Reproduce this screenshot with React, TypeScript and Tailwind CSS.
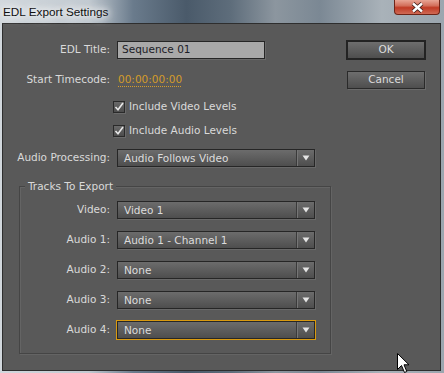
import React from 'react'

const uiFont = "font-['DejaVu_Sans',Verdana,sans-serif]"

function Dropdown({ value, focus }: { value: string; focus?: boolean }) {
  return (
    <div
      className={`flex h-[18px] w-[198px] items-center border border-[#262626] bg-gradient-to-b from-[#6c6c6c] to-[#4e4e4e] ${
        focus ? 'outline-1 outline-[#d99a10]' : 'shadow-[1px_1px_0_#686868]'
      }`}
    >
      <span className="flex-1 pl-[6px] leading-none text-[#dcdcdc]">{value}</span>
      <div className="h-full w-px bg-[#3a3a3a] shadow-[1px_0_0_#767676]" />
      <div className="flex w-[17px] items-center justify-center">
        <svg width="8" height="6" viewBox="0 0 8 6">
          <path d="M0.5 0.5 H7.5 L4 5.5 Z" fill="#e4e4e4" />
        </svg>
      </div>
    </div>
  )
}

function Row({ label, labelW, children }: { label: string; labelW: string; children: React.ReactNode }) {
  return (
    <div className="flex h-[18px] items-center">
      <span className={`${labelW} text-right text-[#dadada]`}>{label}</span>
      <div className="ml-[7px]">{children}</div>
    </div>
  )
}

function Check({ label }: { label: string }) {
  return (
    <div className="ml-[110px] flex h-[18px] items-center">
      <span className="flex h-[12px] w-[12px] items-center justify-center border border-[#2a2a2a] bg-gradient-to-b from-[#6a6a6a] to-[#4c4c4c] shadow-[1px_1px_0_#6a6a6a]">
        <svg width="10" height="10" viewBox="0 0 10 10">
          <path d="M1.5 5 L4 7.8 L9 1" fill="none" stroke="#e8e8e8" strokeWidth="1.6" />
        </svg>
      </span>
      <span className="ml-[4px] text-[#dadada]">{label}</span>
    </div>
  )
}

export default function App() {
  const tracks = [
    { label: 'Video:', value: 'Video 1' },
    { label: 'Audio 1:', value: 'Audio 1 - Channel 1' },
    { label: 'Audio 2:', value: 'None' },
    { label: 'Audio 3:', value: 'None' },
    { label: 'Audio 4:', value: 'None', focus: true },
  ]

  return (
    <div
      className={`relative h-[373px] w-[444px] overflow-hidden ${uiFont} text-[10.5px] bg-[linear-gradient(90deg,#d2d8dd_0%,#c2cad1_20%,#6a7b8c_30%,#4a5a6a_42%,#5e6d7b_52%,#8c969f_62%,#7b8894_72%,#a9b2b9_86%,#9ba6af_100%)]`}
    >
      {/* title bar */}
      <div className="flex h-[23px] items-start justify-between">
        <span className="ml-[3px] mt-[3px] font-['Liberation_Sans',Arial,sans-serif] text-[11.75px] text-[#111] [text-shadow:0_0_6px_#fff,0_0_10px_#fff,0_0_14px_#fff]">
          EDL Export Settings
        </span>
        <div className="mr-[4px] flex h-[15px] w-[46px] items-center justify-center rounded-b-[4px] border border-t-0 border-[#6e2417] bg-[linear-gradient(180deg,#e8a595_0%,#d3705c_40%,#c03b25_55%,#cf6a55_100%)]">
          <svg width="13" height="11" viewBox="0 0 13 11">
            <path d="M2 1.5 L11 9.5 M11 1.5 L2 9.5" stroke="#3a1a14" strokeWidth="4" />
            <path d="M2 1.5 L11 9.5 M11 1.5 L2 9.5" stroke="#fff" strokeWidth="2.4" />
          </svg>
        </div>
      </div>

      {/* client area */}
      <div className="ml-[2px] flex h-[348px] w-[439px] border border-[#2e2e2e] bg-[#595959]">
        <div className="flex w-[328px] flex-col">
          <div className="mt-[17px]">
            <Row label="EDL Title:" labelW="w-[107px]">
              <div className="flex h-[18px] w-[148px] items-center border border-[#262626] bg-[#a9a9a9] pl-[4px] text-[#1c1c26] shadow-[1px_1px_0_#6a6a6a]">
                Sequence 01
              </div>
            </Row>
          </div>
          <div className="mt-[12px]">
            <Row label="Start Timecode:" labelW="w-[107px]">
              <span className="ml-[1px] text-[#d49c2a] underline decoration-dotted decoration-[#d49c2a] underline-offset-[3px]">
                00:00:00:00
              </span>
            </Row>
          </div>
          <div className="mt-[9px]">
            <Check label="Include Video Levels" />
          </div>
          <div className="mt-[6px]">
            <Check label="Include Audio Levels" />
          </div>
          <div className="mt-[9px]">
            <Row label="Audio Processing:" labelW="w-[107px]">
              <Dropdown value="Audio Follows Video" />
            </Row>
          </div>

          {/* group box */}
          <div className="relative ml-[16px] mt-[19px] flex w-[312px] flex-col gap-[12px] border border-[#454545] px-0 pb-[14px] pt-[14px] shadow-[inset_1px_1px_0_#646464,1px_1px_0_#646464]">
            <span className="absolute -top-[8px] left-[5px] bg-[#595959] px-[3px] text-[#dadada]">Tracks To Export</span>
            {tracks.map((t) => (
              <Row key={t.label} label={t.label} labelW="w-[90px]">
                <Dropdown value={t.value} focus={t.focus} />
              </Row>
            ))}
          </div>
        </div>

        {/* buttons */}
        <div className="ml-[15px] flex flex-col">
          <button className="mt-[16px] flex h-[20px] w-[80px] items-center justify-center border-2 border-[#232323] bg-gradient-to-b from-[#6e6e6e] to-[#4e4e4e] text-[#dcdcdc]">
            OK
          </button>
          <button className="ml-[1px] mt-[11px] flex h-[18px] w-[78px] items-center justify-center border border-[#2a2a2a] bg-gradient-to-b from-[#6e6e6e] to-[#4e4e4e] text-[#dcdcdc] shadow-[1px_1px_0_#6a6a6a]">
            Cancel
          </button>
        </div>
      </div>

      {/* mouse pointer */}
      <svg className="absolute left-[397px] top-[353px]" width="13" height="21" viewBox="0 0 13 21">
        <path d="M0.5 0.5 L0.5 16.5 L4.5 12.5 L7.5 19.5 L9.8 18.5 L7 11.8 L12 11.8 Z" fill="#fff" stroke="#000" strokeWidth="1" />
      </svg>
    </div>
  )
}
